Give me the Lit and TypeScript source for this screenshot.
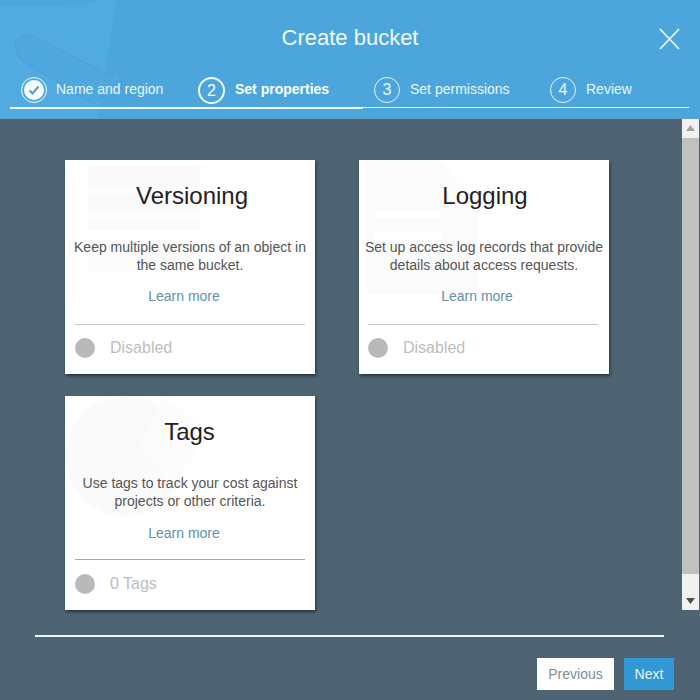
import { LitElement, html, css, svg } from "lit";
import { customElement } from "lit/decorators.js";

type Step = { label: string; mark: string; done?: boolean; active?: boolean };
type Card = { id: string; title: string; text: string[]; status: string };

const STEPS: Step[] = [
  { label: "Name and region", mark: "", done: true },
  { label: "Set properties", mark: "2", active: true },
  { label: "Set permissions", mark: "3" },
  { label: "Review", mark: "4" },
];

const CARDS: Card[] = [
  {
    id: "versioning",
    title: "Versioning",
    text: ["Keep multiple versions of an object in", "the same bucket."],
    status: "Disabled",
  },
  {
    id: "logging",
    title: "Logging",
    text: ["Set up access log records that provide", "details about access requests."],
    status: "Disabled",
  },
  {
    id: "tags",
    title: "Tags",
    text: ["Use tags to track your cost against", "projects or other criteria."],
    status: "0 Tags",
  },
];

// faint shapes that sit behind each card's text
const GHOSTS: Record<string, unknown> = {
  versioning: svg`
    <rect x="23" y="7" width="112" height="63" fill="#fafafa" />
    <rect x="23" y="27" width="112" height="7" fill="#fdfdfd" />
    <rect x="23" y="52" width="112" height="7" fill="#fdfdfd" />
    <rect x="23" y="80" width="112" height="32" fill="#fbfbfb" />
    <rect x="3" y="20" width="7" height="120" fill="#fcfcfc" />`,
  logging: svg`
    <path d="M8 0h70l42 44v90H8z" fill="#fbfbfb" />
    <rect x="16" y="50" width="66" height="8" fill="#fff" />
    <rect x="16" y="72" width="66" height="8" fill="#fff" />`,
  tags: svg`
    <circle cx="60" cy="60" r="60" fill="#fafafa" />
    <path d="M100 0l45 40-40 50-30-40z" fill="#fcfcfc" />`,
};

@customElement("app-root")
export class AppRoot extends LitElement {
  static styles = css`
    :host {
      display: flex;
      flex-direction: column;
      width: 700px;
      height: 700px;
      background: #4e6473;
      font-family: "Liberation Sans", Arial, sans-serif;
      overflow: hidden;
    }

    .header {
      position: relative;
      height: 118px;
      flex: none;
      background: #4ca6dc;
      border-bottom: 1px solid #5b9fc6;
      display: flex;
      flex-direction: column;
      overflow: hidden;
    }

    .header-ghost {
      position: absolute;
      left: 0;
      top: 0;
    }

    .title {
      position: relative;
      margin: 24px 0 0;
      height: 28px;
      line-height: 28px;
      text-align: center;
      color: #f2fbff;
      font-size: 22px;
      font-weight: 400;
    }

    .close {
      position: absolute;
      left: 659px;
      top: 28px;
    }

    .steps {
      position: relative;
      display: flex;
      margin: 25px 11px 0 10px;
      height: 30px;
      border-bottom: 1px solid #e4f5fd;
    }

    .step {
      display: flex;
      align-items: flex-start;
      height: 31px;
      box-sizing: border-box;
      color: #e6f6fd;
      font-size: 14px;
    }

    .step:nth-child(1) {
      width: 176px;
      padding-left: 11px;
      border-bottom: 2px solid #f5fcff;
      height: 32px;
    }
    .step:nth-child(2) {
      width: 177px;
      padding-left: 12px;
      border-bottom: 2px solid #f5fcff;
      height: 32px;
    }
    .step:nth-child(3) {
      width: 176px;
      padding-left: 11px;
    }
    .step:nth-child(4) {
      padding-left: 11px;
    }

    .step.active {
      color: #fff;
      font-weight: 700;
    }

    .mark {
      box-sizing: border-box;
      width: 26px;
      height: 26px;
      flex: none;
      margin: 0 10px 0 0;
      border: 1px solid #dff3fc;
      border-radius: 50%;
      display: flex;
      align-items: center;
      justify-content: center;
      font-size: 16px;
      font-weight: 400;
    }

    .step.active .mark {
      border-width: 2px;
      border-color: #f2fbff;
      width: 27px;
      height: 27px;
    }

    .step.done .mark {
      border-color: #f2fbff;
      margin-right: 9px;
    }

    .check {
      width: 20px;
      height: 20px;
      border-radius: 50%;
      background: #f5fcff;
      display: flex;
      align-items: center;
      justify-content: center;
    }

    .step-label {
      line-height: 18px;
      margin-top: 3px;
      white-space: nowrap;
    }

    .pane {
      flex: none;
      height: 491px;
      display: flex;
    }

    .cards {
      flex: 1;
      display: grid;
      grid-template-columns: 250px 250px;
      grid-template-rows: 214px 214px;
      column-gap: 44px;
      row-gap: 22px;
      padding: 41px 0 0 65px;
    }

    .card {
      position: relative;
      background: #fff;
      box-shadow: 1px 2px 3px rgba(20, 30, 40, 0.7);
      display: flex;
      flex-direction: column;
      overflow: hidden;
    }

    .ghost {
      position: absolute;
      left: 0;
      top: 0;
    }

    .card > :not(.ghost) {
      position: relative;
    }

    .card h2 {
      margin: 21px 0 0;
      height: 30px;
      line-height: 30px;
      font-size: 24px;
      font-weight: 400;
      color: #222;
      text-align: center;
    }

    .card.versioning h2 {
      padding-left: 4px;
    }

    .card.logging h2 {
      padding-left: 2px;
    }

    .card.tags h2 {
      padding-right: 1px;
    }

    .card p {
      margin: 27px 0 0;
      font-size: 14px;
      line-height: 18px;
      color: #555;
      text-align: center;
      white-space: nowrap;
    }

    .card a {
      margin: 13px 12px 0 0;
      font-size: 14px;
      line-height: 18px;
      color: #6191ac;
      text-align: center;
      text-decoration: none;
    }

    .card.logging a {
      margin-right: 14px;
    }

    .card.tags a {
      margin-top: 14px;
    }

    .rule {
      margin: 19px 10px 0 10px;
      height: 1px;
      background: #c4c4c4;
    }

    .card.logging .rule {
      margin-left: 9px;
      margin-right: 11px;
    }

    .card.tags .rule {
      margin-top: 17px;
      background: #a9a9a9;
    }

    .status {
      display: flex;
      align-items: center;
      margin: 13px 0 0 10px;
      font-size: 16px;
      color: #bdbdbd;
    }

    .card.logging .status {
      margin-left: 9px;
    }

    .card.tags .status {
      margin-top: 14px;
    }

    .dot {
      width: 20px;
      height: 20px;
      border-radius: 50%;
      background: #b9b9b9;
      margin-right: 15px;
    }

    .scrollbar {
      flex: none;
      width: 17px;
      margin-right: 1px;
      background: #f1f1f1;
      display: flex;
      flex-direction: column;
      align-items: stretch;
    }

    .arrow {
      height: 18px;
      display: flex;
      align-items: center;
      justify-content: center;
      flex: none;
    }

    .thumb {
      height: 436px;
      margin: 1px 0;
      background: #c1c1c1;
    }

    .track {
      flex: 1;
    }

    .footer {
      flex: 1;
      display: flex;
      flex-direction: column;
      padding: 25px 26px 0 35px;
    }

    .footer-rule {
      height: 2px;
      width: 629px;
      background: #f0f7fb;
    }

    .buttons {
      display: flex;
      justify-content: flex-end;
      gap: 10px;
      margin-top: 21px;
    }

    button {
      height: 32px;
      padding: 0;
      border: 0;
      font-family: inherit;
      font-size: 14px;
    }

    .previous {
      width: 77px;
      background: #fff;
      color: #828c93;
    }

    .next {
      width: 50px;
      background: #3197d5;
      color: #eaf6fd;
    }
  `;

  renderStep(step: Step) {
    const cls = `step ${step.done ? "done" : ""} ${step.active ? "active" : ""}`;
    return html`
      <div class=${cls}>
        <span class="mark">
          ${step.done
            ? html`<span class="check">
                <svg width="14" height="14" viewBox="0 0 14 14">
                  <path d="M2.5 7.5l3 3 6-7" fill="none" stroke="#5f9dbf" stroke-width="2.2" />
                </svg>
              </span>`
            : step.mark}
        </span>
        <span class="step-label">${step.label}</span>
      </div>
    `;
  }

  renderCard(card: Card) {
    return html`
      <div class="card ${card.id}">
        <svg class="ghost" width="250" height="214">${GHOSTS[card.id]}</svg>
        <h2>${card.title}</h2>
        <p>${card.text[0]}<br />${card.text[1]}</p>
        <a href="#">Learn more</a>
        <div class="rule"></div>
        <div class="status"><span class="dot"></span>${card.status}</div>
      </div>
    `;
  }

  render() {
    return html`
      <div class="header">
        <svg class="header-ghost" width="130" height="118">
          <path d="M0 0h116l-18 118H0z" fill="#51abe0" />
          <path d="M0 0h100q-12 5-40 5H0z" fill="#4ca6dc" />
          <path
            d="M20 38q-6 2-4 12t8 12l70 42 8-8 8 4 10-10q4-10-4-20l-6 6-72-38q-10-6-18 0z"
            fill="#4ea8de"
            stroke="#4a9fd6"
          />
        </svg>
        <h1 class="title">Create bucket</h1>
        <svg class="close" width="21" height="22" viewBox="0 0 21 22">
          <path d="M1 1l19 20M20 1L1 21" stroke="#f2fbff" stroke-width="1.6" fill="none" />
        </svg>
        <div class="steps">${STEPS.map((s) => this.renderStep(s))}</div>
      </div>
      <div class="pane">
        <div class="cards">${CARDS.map((c) => this.renderCard(c))}</div>
        <div class="scrollbar">
          <div class="arrow">
            <svg width="9" height="6"><path d="M4.5 0L9 6H0z" fill="#a3a3a3" /></svg>
          </div>
          <div class="thumb"></div>
          <div class="track"></div>
          <div class="arrow">
            <svg width="9" height="6"><path d="M0 0h9L4.5 6z" fill="#505050" /></svg>
          </div>
        </div>
      </div>
      <div class="footer">
        <div class="footer-rule"></div>
        <div class="buttons">
          <button class="previous">Previous</button>
          <button class="next">Next</button>
        </div>
      </div>
    `;
  }
}
